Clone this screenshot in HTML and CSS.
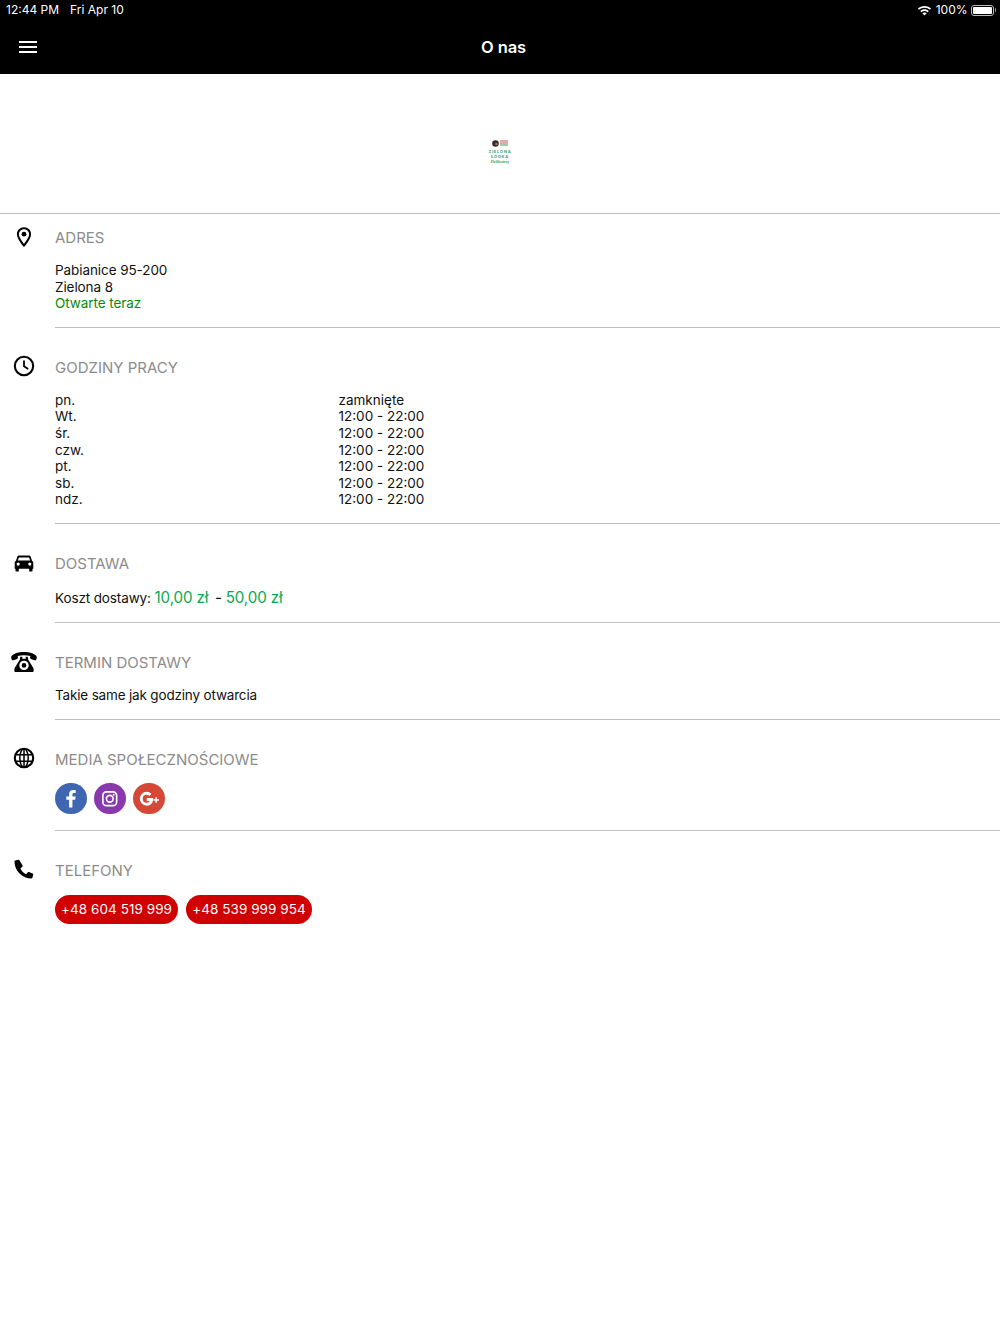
FILE: index.html
```html
<!DOCTYPE html>
<html lang="pl">
<head>
<meta charset="utf-8">
<title>O nas</title>
<link rel="stylesheet" href="styles.css">
</head>
<body>
<header class="topbar">
  <div class="status">
    <div class="status-left"><span>12:44 PM</span><span>Fri Apr 10</span></div>
    <div class="status-right">
      <svg class="wifi" viewBox="0 0 16 12" width="15" height="11"><path d="M8 1C5.2 1 2.7 2.1.8 3.9l1.3 1.4C3.6 3.8 5.700 2.900 8 2.900s4.400.9 5.900 2.400l1.300-1.400C13.300 2.100 10.800 1 8 1z" fill="#fff"/><path d="M8 4.600c-1.800 0-3.400.7-4.600 1.900l1.300 1.400C5.600 7 6.700 6.500 8 6.500s2.400.5 3.300 1.400l1.300-1.400C11.400 5.300 9.800 4.600 8 4.600z" fill="#fff"/><path d="M8 8.100c-.9 0-1.700.4-2.300 1L8 11.500l2.300-2.400c-.6-.6-1.400-1-2.300-1z" fill="#fff"/></svg>
      <span>100%</span>
      <span class="battery"><span class="battery-fill"></span></span><span class="battery-tip"></span>
    </div>
  </div>
  <div class="navbar">
    <button class="menu" aria-label="Menu"><span></span><span></span><span></span></button>
    <h1>O nas</h1>
  </div>
</header>

<div class="logo-band">
  <div class="logo">
    <div class="logo-top"><svg viewBox="0 0 7 7" width="7" height="7"><circle cx="3.500" cy="3.500" r="3.300" fill="#3a2a26"/><circle cx="4.400" cy="4" r="1.300" fill="#a5705e"/></svg><span class="logo-flag"></span></div>
    <div class="logo-word">ZIELONA</div>
    <div class="logo-word">ŁÓDKA</div>
    <div class="logo-script">Delikatesy</div>
  </div>
</div>

<main>
  <section class="row row-first">
    <svg class="icon" viewBox="0 0 24 24" width="24" height="24"><path fill-rule="evenodd" d="M12 2.200c-4 0-7.100 3.100-7.100 7 0 5 7.100 12.900 7.100 12.900s7.100-7.900 7.100-12.900c0-3.900-3.100-7-7.100-7zm0 2c2.800 0 5.100 2.200 5.100 5 0 2.700-3 6.800-5.100 9.700-2.100-2.900-5.100-7-5.100-9.700 0-2.800 2.300-5 5.100-5z"/><circle cx="12" cy="9.200" r="2.400"/></svg>
    <div class="body">
      <h2>ADRES</h2>
      <div class="content">
        <div>Pabianice 95-200</div>
        <div>Zielona 8</div>
        <div class="open">Otwarte teraz</div>
      </div>
    </div>
  </section>

  <section class="row">
    <svg class="icon" viewBox="0 0 24 24" width="24" height="24"><circle cx="12" cy="12" r="9.200" fill="none" stroke="#000" stroke-width="2.100"/><path d="M12 6.500V12.300L16.200 14.900" fill="none" stroke="#000" stroke-width="1.800"/></svg>
    <div class="body">
      <h2>GODZINY PRACY</h2>
      <div class="content hours">
        <span>pn.</span><span>zamknięte</span>
        <span>Wt.</span><span>12:00 - 22:00</span>
        <span>śr.</span><span>12:00 - 22:00</span>
        <span>czw.</span><span>12:00 - 22:00</span>
        <span>pt.</span><span>12:00 - 22:00</span>
        <span>sb.</span><span>12:00 - 22:00</span>
        <span>ndz.</span><span>12:00 - 22:00</span>
      </div>
    </div>
  </section>

  <section class="row">
    <svg class="icon icon-car" viewBox="0 0 24 24" width="24" height="24"><path fill-rule="evenodd" d="M7.200 3.500h9.600c.9 0 1.700.6 2 1.400l1.200 3.900c.9.500 1.300 1.200 1.300 2.100v5.800h-.8v2c0 .5-.4.900-.9.900h-1.500c-.5 0-.9-.4-.9-.9v-1.900H6.800v1.900c0 .5-.4.900-.9.900H4.400c-.5 0-.9-.4-.9-.9v-2h-.8v-5.800c0-.9.400-1.600 1.300-2.100l1.200-3.900c.3-.8 1.100-1.400 2-1.400zM7.400 5.400c-.3 0-.5.100-.6.400L5.900 8.500h12.200l-.9-2.700c-.1-.3-.3-.4-.6-.4zM6.200 10.500a1.600 1.600 0 1 0 0 3.200 1.600 1.600 0 0 0 0-3.200zm11.600 0a1.600 1.600 0 1 0 0 3.200 1.600 1.600 0 0 0 0-3.200z"/></svg>
    <div class="body body-cost">
      <h2>DOSTAWA</h2>
      <div class="content cost">Koszt dostawy: <span class="price">10,00 zł</span> <span class="dash">-</span> <span class="price">50,00 zł</span></div>
    </div>
  </section>

  <section class="row">
    <svg class="icon icon-phone" viewBox="0 0 26 24" width="26" height="24"><path fill-rule="evenodd" d="M13 2C7.500 2 3 3.400.8 5.800-.1 6.800.1 8.900 1 10c.4.400 1 .4 1.500.2l3.600-1.300c.7-.3.900-.9.800-1.600l-.2-1.200c1.900-.6 4-.8 6.300-.8s4.400.2 6.300.8l-.2 1.200c-.1.700.1 1.300.8 1.600l3.600 1.300c.5.200 1.100.2 1.500-.2.900-1.100 1.100-3.200.2-4.200C23 3.400 18.500 2 13 2zM9.300 6.700 8.700 9.800 3.700 18c-.2.400-.3.800-.3 1.200v1.700c0 .6.500 1.100 1.100 1.100h17c.6 0 1.100-.5 1.100-1.100v-1.700c0-.4-.1-.8-.3-1.200l-5-8.200-.6-3.100h-2v2.100h-3.400V6.700zM13 10.700a4.700 4.700 0 1 1 0 9.400 4.700 4.700 0 0 1 0-9.400zm0 2.300a2.400 2.400 0 1 0 0 4.800 2.400 2.400 0 0 0 0-4.800z"/></svg>
    <div class="body">
      <h2>TERMIN DOSTAWY</h2>
      <div class="content note">Takie same jak godziny otwarcia</div>
    </div>
  </section>

  <section class="row">
    <svg class="icon" viewBox="0 0 24 24" width="24" height="24" fill="none" stroke="#000" stroke-width="1.500"><circle cx="12" cy="12" r="9.200" stroke-width="2.100"/><ellipse cx="12" cy="12" rx="4.200" ry="9.200"/><path d="M3.200 8.800h17.600M3.200 15.200h17.600M12 3v18"/></svg>
    <div class="body">
      <h2>MEDIA SPOŁECZNOŚCIOWE</h2>
      <div class="socials">
        <span class="social fb"><svg viewBox="0 0 32 32" width="31.500" height="31.500"><path fill="#fff" d="M17.700 25v-8h2.800l.5-3.300h-3.300v-2c0-1 .3-1.600 1.700-1.600H21V7.200c-.3 0-1.300-.2-2.500-.2-2.500 0-4.200 1.500-4.200 4.300v2.400h-2.800V17h2.800v8z"/></svg></span>
        <span class="social ig"><svg viewBox="0 0 32 32" width="31.500" height="31.500" fill="none" stroke="#fff" stroke-width="1.700"><rect x="9" y="9" width="14" height="14" rx="3.800"/><circle cx="16" cy="16" r="3.400"/><circle cx="20" cy="12" r=".7" fill="#fff" stroke-width=".6"/></svg></span>
        <span class="social gp"><svg viewBox="0 0 32 32" width="31.500" height="31.500"><path fill="none" stroke="#fff" stroke-width="3" d="M17.700 12a5.500 5.500 0 0 0-3.800-1.500 5.500 5.500 0 1 0 0 11c3.100 0 4.900-2 5.100-4.800h-5"/><path fill="#fff" d="M22.800 14.500h1.500v2h2V18h-2v2h-1.500v-2h-2v-1.500h2z"/></svg></span>
      </div>
    </div>
  </section>

  <section class="row row-last">
    <svg class="icon" viewBox="0 0 24 24" width="24" height="24"><path d="M6.200 2.700 3.300 3.400c-.5.100-.8.500-.8 1 0 9.300 7.700 17 17 17 .5 0 .9-.3 1-.8l.7-2.900c.1-.5-.1-1-.6-1.200l-3.600-1.500c-.4-.2-.9-.1-1.200.3l-1.600 1.900c-2.500-1.200-4.600-3.300-5.800-5.800l1.900-1.600c.4-.3.500-.8.300-1.200L7.400 3.300c-.2-.5-.7-.7-1.200-.6z"/></svg>
    <div class="body">
      <h2>TELEFONY</h2>
      <div class="phones">
        <a class="phone">+48 604 519 999</a>
        <a class="phone">+48 539 999 954</a>
      </div>
    </div>
  </section>
</main>
</body>
</html>
```
FILE: styles.css
```css
* { box-sizing: border-box; }
html, body { margin: 0; padding: 0; }
body {
  width: 1000px;
  min-height: 1334px;
  background: #fff;
  color: #111;
  font-family: Inter, "Liberation Sans", sans-serif;
  font-size: 13.500px;
  letter-spacing: -.08px;
  line-height: 16.600px;
}
.topbar { background: #000; color: #fff; height: 74px; }
.status {
  height: 20px;
  padding: 0 4px 0 6px;
  display: flex;
  justify-content: space-between;
  align-items: center;
  font-size: 12px;
  letter-spacing: 0;
}
.status-left { display: flex; gap: 11px; }
.status-right { display: flex; align-items: center; }
.wifi { margin-right: 4px; }
.battery {
  width: 23px;
  height: 11px;
  margin-left: 3px;
  border: 1px solid #bbb;
  border-radius: 3px;
  padding: 1px;
  display: block;
}
.battery-fill { display: block; height: 100%; background: #fff; border-radius: 1px; }
.battery-tip { width: 1.500px; height: 4px; background: #999; margin-left: 1px; border-radius: 0 1px 1px 0; }
.navbar { height: 54px; display: flex; align-items: center; position: relative; }
.menu {
  width: 18px;
  height: 12px;
  margin-left: 19px;
  margin-bottom: 1px;
  padding: 0;
  border: 0;
  background: none;
  display: flex;
  flex-direction: column;
  justify-content: space-between;
}
.menu span { display: block; height: 2px; background: #fff; }
.navbar h1 {
  position: absolute;
  left: 0;
  right: -7px;
  top: 18px;
  margin: 0;
  text-align: center;
  font-size: 16.500px;
  line-height: 19px;
  font-weight: 600;
}
.logo-band {
  height: 140px;
  border-bottom: 1px solid #bdbdbd;
  display: flex;
  justify-content: center;
  padding-top: 66px;
}
.logo { width: 24px; text-align: center; color: #2fa866; }
.logo-top { height: 7px; display: flex; justify-content: center; gap: 1px; margin-bottom: 2px; }
.logo-flag { width: 8px; height: 6px; background: linear-gradient(#e9a9a6 50%, #9fc9a9 50%); }
.logo-word { font-size: 4px; line-height: 5px; font-weight: 700; letter-spacing: .8px; white-space: nowrap; }
.logo-script { font-size: 4.500px; line-height: 5px; font-weight: 700; font-family: "Liberation Serif", serif; font-style: italic; letter-spacing: 0; }
.row { display: flex; }
.row .icon { flex: none; margin: 26px 0 0 12px; }
.row .icon-car { margin-top: 28px; }
.row .icon-phone { margin: 27px 0 0 11px; }
.icon + .body { margin-left: 19px; }
.icon-phone + .body { margin-left: 18px; }
.body {
  flex: 1;
  padding-top: 30px;
  padding-bottom: 15px;
  border-bottom: 1px solid #bdbdbd;
}
.row-first .icon { margin-top: 11px; }
.row-first .body { padding-top: 14px; padding-bottom: 15px; }
.row-last .body { border-bottom: 0; }
.body-cost { padding-bottom: 14px; }
h2 {
  margin: 0;
  font-size: 15px;
  line-height: 19px;
  font-weight: 400;
  letter-spacing: 0;
  color: #8c8c8c;
}
.content { margin-top: 15px; }
.open { color: #0a8a0a; }
.note { letter-spacing: -.17px; }
.hours { display: grid; grid-template-columns: 283.500px 1fr; letter-spacing: 0; }
.cost { margin-top: 15px; line-height: 19px; letter-spacing: -.12px; }
.price { color: #0aa84f; font-size: 15.200px; }
.dash { font-size: 15.200px; margin-left: 3px; }
.socials { display: flex; gap: 7.500px; margin-top: 14px; height: 32px; }
.social { width: 31.500px; height: 31.500px; border-radius: 50%; display: block; }
.fb { background: #3f67b1; }
.ig { background: #8a38ad; }
.gp { background: #d34836; }
.phones { display: flex; gap: 8px; margin-top: 15px; }
.phone {
  display: block;
  height: 29px;
  padding: 0 6.100px;
  border-radius: 15px;
  background: #d10000;
  color: #fff;
  font-size: 13.500px;
  line-height: 29px;
  letter-spacing: .05px;
}
```
